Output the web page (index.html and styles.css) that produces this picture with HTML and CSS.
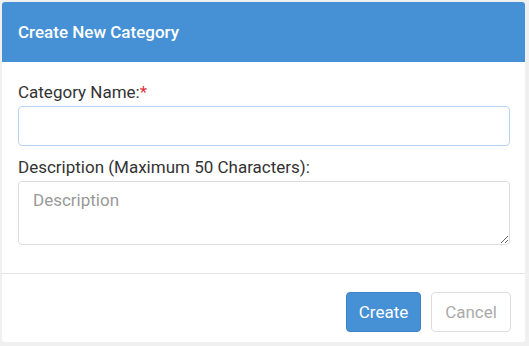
FILE: index.html
```html
<!DOCTYPE html>
<html lang="en">
<head>
  <meta charset="UTF-8" />
  <title>Create New Category</title>
  <link rel="stylesheet" href="styles.css">
</head>
<body>

<div class="modal">
  <div class="modal-header">
    <h2>Create New Category</h2>
  </div>

  <div class="modal-body">
    <label for="catName">Category Name:<span class="req">*</span></label>
    <input type="text" id="catName" class="field" />

    <label for="catDesc">Description (Maximum 50 Characters):</label>
    <textarea id="catDesc" class="field area" placeholder="Description" maxlength="50"></textarea>
  </div>

  <div class="modal-footer">
    <button class="btn btn-primary">Create</button>
    <button class="btn btn-default">Cancel</button>
  </div>
</div>

</body>
</html>
```

FILE: styles.css
```css
* {
  box-sizing: border-box;
  margin: 0;
  padding: 0;
}

body {
  font-family: Roboto, 'Liberation Sans', sans-serif;
  background: #f0f0f0;
  color: #333;
  padding: 2px 4px 4px 2px;
}

.modal {
  background: #fff;
  width: 523px;
  height: 340px;
  border-radius: 3px;
  overflow: hidden;
  display: flex;
  flex-direction: column;
}

.modal-header {
  background: #4691d6;
  height: 60px;
  display: flex;
  align-items: center;
  padding-left: 16px;
}

.modal-header h2 {
  color: #fff;
  font-size: 17px;
  font-weight: 500;
}

.modal-body {
  padding: 20px 15px 0 16px;
  height: 212px;
  border-bottom: 1px solid #e5e5e5;
}

label {
  display: block;
  font-size: 17px;
  line-height: 20px;
  color: #333;
  margin-bottom: 4px;
}

.req {
  color: #e0323c;
}

.field {
  display: block;
  width: 100%;
  font-family: inherit;
  font-size: 17px;
  border: 1px solid #ddd;
  border-radius: 4px;
  background: #fff;
  outline: none;
}

input.field {
  height: 40px;
  border-color: #b5d3f1;
  margin-bottom: 11px;
}

.area {
  height: 64px;
  padding: 8px 14px;
  resize: vertical;
  color: #555;
}

.area::placeholder {
  color: #999;
}

.modal-footer {
  display: flex;
  justify-content: flex-end;
  gap: 10px;
  padding: 18px 14px 0 0;
}

.btn {
  font-family: inherit;
  font-size: 17px;
  height: 40px;
  border-radius: 4px;
  cursor: pointer;
}

.btn-primary {
  background: #4691d6;
  border: 1px solid #3c83c6;
  color: #fff;
  width: 75px;
}

.btn-default {
  background: #fff;
  border: 1px solid #ddd;
  color: #aaa;
  width: 80px;
}
```
